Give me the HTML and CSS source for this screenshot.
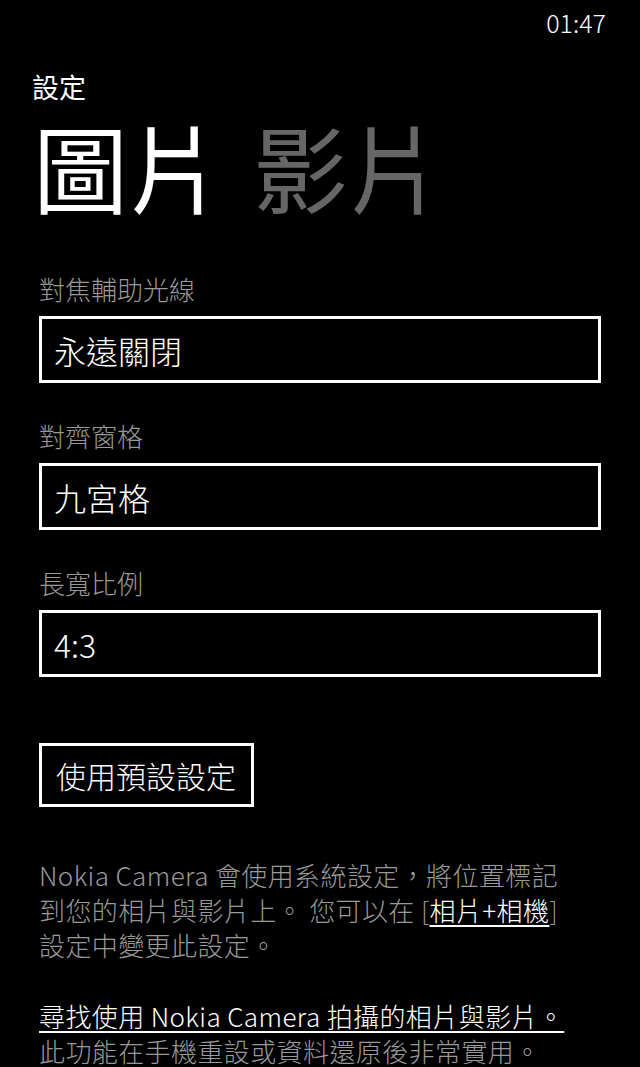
FILE: index.html
```html
<!DOCTYPE html>
<html lang="zh-Hant">
<head>
  <meta charset="utf-8">
  <title>設定</title>
  <link rel="stylesheet" href="styles.css">
</head>
<body>
  <div class="status-bar">
    <span class="clock">01:47</span>
  </div>

  <div class="app-title">設定</div>

  <div class="pivot">
    <span class="pivot-item active">圖片</span>
    <span class="pivot-item">影片</span>
  </div>

  <div class="settings">
    <div class="field">
      <div class="field-label">對焦輔助光線</div>
      <div class="picker">永遠關閉</div>
    </div>
    <div class="field">
      <div class="field-label">對齊窗格</div>
      <div class="picker">九宮格</div>
    </div>
    <div class="field">
      <div class="field-label">長寬比例</div>
      <div class="picker">4:3</div>
    </div>

    <button class="reset-btn" type="button">使用預設設定</button>

    <p class="note">
      Nokia Camera 會使用系統設定，將位置標記<br>
      到您的相片與影片上。 您可以在 [<a class="link" href="#">相片+相機</a>]<br>
      設定中變更此設定。
    </p>

    <p class="note">
      <a class="link" href="#">尋找使用 Nokia Camera 拍攝的相片與影片。</a><br>
      此功能在手機重設或資料還原後非常實用。
    </p>
  </div>
</body>
</html>
```

FILE: styles.css
```css
body {
  margin: 0;
  background-color: #000;
  color: #fff;
  font-family: "Noto Sans CJK TC", "Noto Sans", sans-serif;
  overflow: hidden;
}

/* Status bar */
.status-bar {
  display: flex;
  justify-content: flex-end;
  height: 44px;
  padding-right: 34px;
  font-size: 25px;
  line-height: 44px;
  font-weight: 300;
}

/* Header */
.app-title {
  margin-top: 28px;
  padding-left: 32px;
  font-size: 27px;
  line-height: 30px;
}

.pivot {
  display: flex;
  gap: 30px;
  margin-top: 14px;
  padding-left: 33px;
  font-size: 95px;
  line-height: 100px;
}

.pivot-item {
  color: #666;
}

.pivot-item.active {
  color: #fff;
}

/* Settings list */
.settings {
  padding: 0 39px;
  margin-top: 56px;
}

.field {
  margin-bottom: 36px;
}

.field-label {
  color: #999;
  font-size: 26px;
  line-height: 34px;
  font-weight: 300;
  margin-bottom: 10px;
}

.picker {
  box-sizing: border-box;
  height: 67px;
  border: 3px solid #fff;
  padding: 2px 12px 0;
  font-size: 32px;
  line-height: 59px;
  font-weight: 300;
}

.reset-btn {
  display: block;
  box-sizing: border-box;
  height: 64px;
  margin-top: 66px;
  padding: 0 15px 0 14px;
  background: #000;
  color: #fff;
  border: 3px solid #fff;
  border-radius: 0;
  font-family: inherit;
  font-size: 30px;
  line-height: 56px;
  font-weight: 300;
}

.note {
  margin: 50px 0 0;
  color: #999;
  font-size: 26px;
  line-height: 35px;
  font-weight: 300;
  letter-spacing: 0.4px;
}

.note + .note {
  margin-top: 36px;
}

.link {
  color: #fff;
  text-decoration: underline;
  text-decoration-thickness: 2px;
  text-underline-offset: 4px;
}
```
